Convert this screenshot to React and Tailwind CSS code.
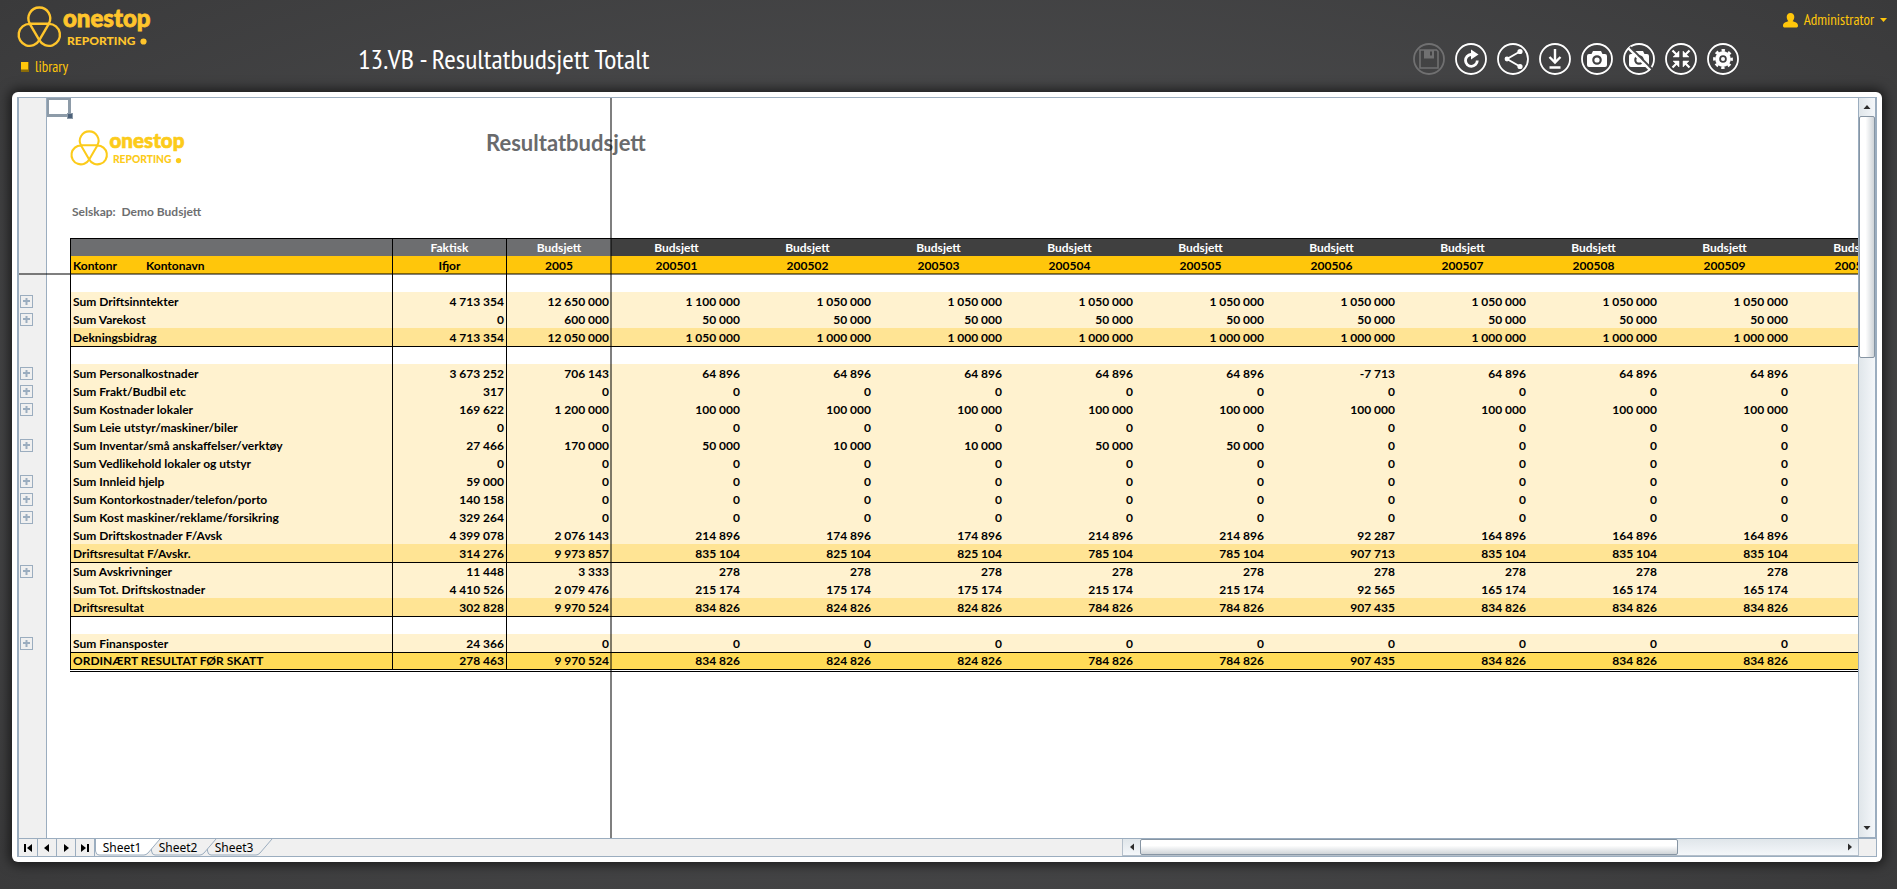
import { useState } from "react";

const months = [
  "200501",
  "200502",
  "200503",
  "200504",
  "200505",
  "200506",
  "200507",
  "200508",
  "200509",
  "200510",
];

const fill = (v) => Array(9).fill(v);

// kind: blank | line | sum | total, expand = has a [+] in the outline gutter
const rows = [
  { kind: "blank" },
  {
    kind: "line",
    expand: true,
    name: "Sum Driftsinntekter",
    actual: "4 713 354",
    year: "12 650 000",
    values: ["1 100 000", ...Array(8).fill("1 050 000")],
  },
  {
    kind: "line",
    expand: true,
    name: "Sum Varekost",
    actual: "0",
    year: "600 000",
    values: fill("50 000"),
  },
  {
    kind: "sum",
    name: "Dekningsbidrag",
    actual: "4 713 354",
    year: "12 050 000",
    values: ["1 050 000", ...Array(8).fill("1 000 000")],
  },
  { kind: "blank" },
  {
    kind: "line",
    expand: true,
    name: "Sum Personalkostnader",
    actual: "3 673 252",
    year: "706 143",
    values: [
      "64 896",
      "64 896",
      "64 896",
      "64 896",
      "64 896",
      "-7 713",
      "64 896",
      "64 896",
      "64 896",
    ],
  },
  {
    kind: "line",
    expand: true,
    name: "Sum Frakt/Budbil etc",
    actual: "317",
    year: "0",
    values: fill("0"),
  },
  {
    kind: "line",
    expand: true,
    name: "Sum Kostnader lokaler",
    actual: "169 622",
    year: "1 200 000",
    values: fill("100 000"),
  },
  {
    kind: "line",
    name: "Sum Leie utstyr/maskiner/biler",
    actual: "0",
    year: "0",
    values: fill("0"),
  },
  {
    kind: "line",
    expand: true,
    name: "Sum Inventar/små anskaffelser/verktøy",
    actual: "27 466",
    year: "170 000",
    values: ["50 000", "10 000", "10 000", "50 000", "50 000", "0", "0", "0", "0"],
  },
  {
    kind: "line",
    name: "Sum Vedlikehold lokaler og utstyr",
    actual: "0",
    year: "0",
    values: fill("0"),
  },
  {
    kind: "line",
    expand: true,
    name: "Sum Innleid hjelp",
    actual: "59 000",
    year: "0",
    values: fill("0"),
  },
  {
    kind: "line",
    expand: true,
    name: "Sum Kontorkostnader/telefon/porto",
    actual: "140 158",
    year: "0",
    values: fill("0"),
  },
  {
    kind: "line",
    expand: true,
    name: "Sum Kost maskiner/reklame/forsikring",
    actual: "329 264",
    year: "0",
    values: fill("0"),
  },
  {
    kind: "line",
    name: "Sum Driftskostnader F/Avsk",
    actual: "4 399 078",
    year: "2 076 143",
    values: [
      "214 896",
      "174 896",
      "174 896",
      "214 896",
      "214 896",
      "92 287",
      "164 896",
      "164 896",
      "164 896",
    ],
  },
  {
    kind: "sum",
    name: "Driftsresultat F/Avskr.",
    actual: "314 276",
    year: "9 973 857",
    values: [
      "835 104",
      "825 104",
      "825 104",
      "785 104",
      "785 104",
      "907 713",
      "835 104",
      "835 104",
      "835 104",
    ],
  },
  {
    kind: "line",
    expand: true,
    name: "Sum Avskrivninger",
    actual: "11 448",
    year: "3 333",
    values: fill("278"),
  },
  {
    kind: "line",
    name: "Sum Tot. Driftskostnader",
    actual: "4 410 526",
    year: "2 079 476",
    values: [
      "215 174",
      "175 174",
      "175 174",
      "215 174",
      "215 174",
      "92 565",
      "165 174",
      "165 174",
      "165 174",
    ],
  },
  {
    kind: "sum",
    name: "Driftsresultat",
    actual: "302 828",
    year: "9 970 524",
    values: [
      "834 826",
      "824 826",
      "824 826",
      "784 826",
      "784 826",
      "907 435",
      "834 826",
      "834 826",
      "834 826",
    ],
  },
  { kind: "blank" },
  {
    kind: "line",
    expand: true,
    name: "Sum Finansposter",
    actual: "24 366",
    year: "0",
    values: fill("0"),
  },
  {
    kind: "total",
    name: "ORDINÆRT RESULTAT FØR SKATT",
    actual: "278 463",
    year: "9 970 524",
    values: [
      "834 826",
      "824 826",
      "824 826",
      "784 826",
      "784 826",
      "907 435",
      "834 826",
      "834 826",
      "834 826",
    ],
  },
];

const rowStyles = {
  blank: "h-[18px] bg-white",
  line: "h-[18px] bg-[#fff2cf]",
  sum: "h-[18px] bg-[#ffe494]",
  total: "h-[17px] bg-[#ffdb57] leading-4",
};

function Logo({ className }) {
  return (
    <svg
      viewBox="0 0 134 42"
      className={`overflow-visible ${className}`}
      role="img"
      aria-label="onestop reporting"
    >
      <g fill="none" stroke="currentColor" strokeWidth="2.4" strokeLinejoin="round">
        <path d="M12.8 16.7 A10.9 10.9 0 1 1 31.8 16.7 Z" />
        <path d="M12.8 16.9 A11 11 0 1 0 22.3 33.2 Z" />
        <path d="M31.8 16.9 A11 11 0 1 1 22.3 33.2 Z" />
      </g>
      <text
        x="46"
        y="20"
        fill="currentColor"
        stroke="currentColor"
        strokeWidth="0.8"
        fontSize="24"
        fontWeight="900"
        fontFamily="Lato, sans-serif"
      >
        onestop
      </text>
      <text
        x="50"
        y="37.5"
        fill="currentColor"
        fontSize="12"
        fontWeight="900"
        fontFamily="Lato, sans-serif"
      >
        REPORTING
      </text>
      <circle cx="126.500" cy="34.500" r="3.1" fill="currentColor" />
    </svg>
  );
}

const tools = [
  {
    label: "Save",
    disabled: true,
    icon: (
      <>
        <path d="M7 7H23.5L25 8.500V25H7Z" fill="none" stroke="currentColor" strokeWidth="1.600" />
        <path d="M11 7h10v8.500H11ZM17 8.500v4h2v-4Z" fill="currentColor" fillRule="evenodd" />
      </>
    ),
  },
  {
    label: "Refresh",
    icon: (
      <>
        <path
          d="M17.500 11.500H16A5.900 5.900 0 1 0 22.300 17.500"
          fill="none"
          stroke="currentColor"
          strokeWidth="2.800"
        />
        <path d="M16 6.500L23.500 11.500L16 16.500Z" fill="currentColor" />
      </>
    ),
  },
  {
    label: "Share",
    icon: (
      <>
        <path d="M23 8.500L10 16L23 23.500" fill="none" stroke="currentColor" strokeWidth="1.900" />
        <circle cx="23" cy="8.500" r="2.600" fill="currentColor" />
        <circle cx="10" cy="16" r="2.400" fill="currentColor" />
        <circle cx="23" cy="23.500" r="2.600" fill="currentColor" />
      </>
    ),
  },
  {
    label: "Download",
    icon: (
      <path
        d="M16 6v13M10.500 14L16 19.500L21.500 14M10.500 24.500h11"
        fill="none"
        stroke="currentColor"
        strokeWidth="2.400"
      />
    ),
  },
  {
    label: "Snapshot",
    icon: (
      <>
        <path
          d="M12 8h8l1.500 3H24a2 2 0 0 1 2 2v9a2 2 0 0 1-2 2H8a2 2 0 0 1-2-2v-9a2 2 0 0 1 2-2h2.500ZM16 12.200a4.800 4.800 0 1 0 0 9.600a4.800 4.800 0 0 0 0-9.600Z"
          fill="currentColor"
          fillRule="evenodd"
        />
        <circle cx="16" cy="17" r="2.600" fill="currentColor" />
      </>
    ),
  },
  {
    label: "Snapshot off",
    icon: (
      <>
        <path
          d="M12 8h8l1.500 3H24a2 2 0 0 1 2 2v9a2 2 0 0 1-2 2H8a2 2 0 0 1-2-2v-9a2 2 0 0 1 2-2h2.500ZM16 12.200a4.800 4.800 0 1 0 0 9.600a4.800 4.800 0 0 0 0-9.600Z"
          fill="currentColor"
          fillRule="evenodd"
        />
        <circle cx="16" cy="17" r="2.600" fill="currentColor" />
        <path d="M7 4L29 26" stroke="#474748" strokeWidth="2.200" />
        <path d="M5 5L27 27" stroke="currentColor" strokeWidth="2.400" />
      </>
    ),
  },
  {
    label: "Collapse",
    icon: (
      <g fill="currentColor" stroke="currentColor">
        <path
          d="M7.500 7.500L13 13M24.500 7.500L19 13M7.500 24.500L13 19M24.500 24.500L19 19"
          strokeWidth="2.200"
        />
        <path
          d="M14 8v6H8ZM18 8v6h6ZM14 24v-6H8ZM18 24v-6h6Z"
          strokeWidth="0.500"
        />
      </g>
    ),
  },
  {
    label: "Settings",
    icon: (
      <>
        <circle cx="16" cy="16" r="5.800" fill="none" stroke="currentColor" strokeWidth="4" />
        <circle
          cx="16"
          cy="16"
          r="8.600"
          fill="none"
          stroke="currentColor"
          strokeWidth="2.600"
          strokeDasharray="3.376 3.376"
          strokeDashoffset="1.688"
        />
        <circle cx="16" cy="16" r="2" fill="currentColor" />
      </>
    ),
  },
];

function Triangle({ points, className }) {
  return (
    <svg viewBox="0 0 12 12" className={className} fill="currentColor" aria-hidden="true">
      <path d={points} />
    </svg>
  );
}

function Header() {
  return (
    <header className="flex h-[92px] shrink-0 text-[#ffc60b]">
      <div className="flex w-[358px] flex-col pt-[7px] pl-[17px]">
        <Logo className="w-[134px] text-[#ffc52c]" />
        <a
          href="#library"
          className="mt-2 ml-1 flex items-center gap-1.5 text-[15px] leading-5"
        >
          <svg viewBox="0 0 8 10" className="h-[10px] w-2" aria-hidden="true">
            <path d="M0 0h8v10H0z" fill="#8a6b08" />
            <path d="M0 0h7v7.500H0z" fill="#ffc60b" />
          </svg>
          library
        </a>
      </div>
      <h1 className="flex-1 pt-[41px] text-[28px] leading-9 text-white">
        13.VB - Resultatbudsjett Totalt
      </h1>
      <div className="flex gap-[10px] pt-[43px]">
        {tools.map((tool) => (
          <button
            key={tool.label}
            type="button"
            aria-label={tool.label}
            disabled={tool.disabled}
            className="h-8 w-8 rounded-full text-white disabled:text-[#707071]"
          >
            <svg viewBox="0 0 32 32" className="h-8 w-8">
              <circle
                cx="16"
                cy="16"
                r="15"
                fill="none"
                stroke="currentColor"
                strokeWidth="1.800"
              />
              {tool.icon}
            </svg>
          </button>
        ))}
      </div>
      <div className="flex w-[158px] justify-end pt-2 pr-[10px]">
        <button type="button" className="flex h-6 items-center text-[15px] leading-5">
          <svg viewBox="0 0 15 15" className="mr-1.5 w-[15px]" fill="currentColor">
            <path d="M7.500 0C10 0 11.300 1.800 11.300 4C11.300 6 10.300 7.300 9.600 8.200C12.500 9 15 10 15 12.500C15 14 14.500 14.500 13 14.500H2C.500 14.500 0 14 0 12.500C0 10 2.500 9 5.400 8.200C4.700 7.300 3.700 6 3.700 4C3.700 1.800 5 0 7.500 0Z" />
          </svg>
          Administrator
          <svg viewBox="0 0 7 4" className="ml-1.5 w-[7px]" fill="currentColor">
            <path d="M0 0h7L3.500 4z" />
          </svg>
        </button>
      </div>
    </header>
  );
}

function Gutter() {
  return (
    <div className="w-7 shrink-0 border-r border-[#9badbf] bg-[#f0f0f0] pt-[176px] pl-px">
      {rows.map((row, i) => (
        <div key={i} className="flex h-[18px] items-center">
          {row.expand && (
            <button
              type="button"
              aria-label={`Expand ${row.name}`}
              className="flex h-[13px] w-[13px] items-center justify-center border border-[#9badbf]"
            >
              <svg viewBox="0 0 7 7" className="h-[7px] w-[7px]">
                <path d="M0 3h7M3.500 0v7" stroke="#9badbf" strokeWidth="2" />
              </svg>
            </button>
          )}
        </div>
      ))}
    </div>
  );
}

function BudgetTable() {
  return (
    <table className="w-[1851px] table-fixed border-separate border-spacing-0 text-[12px] leading-[17px] font-bold text-black">
      <colgroup>
        <col className="w-[74px]" />
        <col className="w-[249px]" />
        <col className="w-[114px]" />
        <col className="w-[104px]" />
        {months.map((m) => (
          <col key={m} className="w-[131px]" />
        ))}
      </colgroup>
      <thead>
        <tr className="h-[18px] text-white">
          <td
            colSpan={2}
            className="border-t border-r border-l border-black bg-[#6d6e70] p-0"
          ></td>
          <th className="border-t border-r border-black bg-[#6d6e70] p-0">Faktisk</th>
          <th className="border-t border-black bg-[#6d6e70] p-0">Budsjett</th>
          {months.map((m) => (
            <th key={m} className="border-t border-black bg-[#404040] p-0">
              Budsjett
            </th>
          ))}
        </tr>
        <tr className="h-[18px] bg-[#ffc60b]">
          <th className="border-l border-black p-0 pl-0.5 text-left">Kontonr</th>
          <th className="border-r border-black p-0 pl-0.5 text-left">Kontonavn</th>
          <th className="border-r border-black p-0">Ifjor</th>
          <th className="p-0">2005</th>
          {months.map((m) => (
            <th key={m} className="p-0">
              {m}
            </th>
          ))}
        </tr>
      </thead>
      <tbody>
        {rows.map((row, i) => {
          // result rows close with a rule, the final row sits between rules
          const line =
            row.kind === "total" || rows[i - 1]?.kind === "sum" ? "border-t" : "";
          return (
            <tr key={i} className={rowStyles[row.kind]}>
              <th
                colSpan={2}
                scope="row"
                className={`border-r border-l border-black p-0 pl-0.5 text-left ${line}`}
              >
                {row.name}
              </th>
              <td className={`border-r border-black p-0 pr-0.5 text-right ${line}`}>
                {row.actual}
              </td>
              <td className={`border-black p-0 pr-0.5 text-right ${line}`}>{row.year}</td>
              {months.map((m, j) => (
                <td key={m} className={`border-black p-0 pr-0.5 text-right ${line}`}>
                  {row.values?.[j]}
                </td>
              ))}
            </tr>
          );
        })}
      </tbody>
    </table>
  );
}

function Sheet() {
  return (
    <div className="relative min-w-0 flex-1 overflow-hidden bg-white pl-[23px]">
      <div className="flex h-[100px] pt-[33px]">
        <Logo className="h-9 w-[115px] text-[#fccb1a]" />
        <h2 className="ml-[301px] text-[22px] leading-6 font-bold text-[#696a6c]">
          Resultatbudsjett
        </h2>
      </div>
      <p className="h-10 pt-[5px] pl-0.5 text-[12px] leading-[17px] font-bold whitespace-pre text-[#6d6e70]">
        Selskap:{"  "}Demo Budsjett
      </p>
      <BudgetTable />
      <div className="h-[3px] w-[1851px] border-y border-black"></div>
      {/* active cell */}
      <div className="absolute top-0 left-0 h-[19px] w-6 border-2 border-r-[3px] border-b-[3px] border-[#8d9ba8]">
        <span className="absolute -right-[5px] -bottom-[5px] h-[6px] w-[6px] border border-[#8d9ba8] bg-[#4c617a]"></span>
      </div>
      {/* frozen column edge */}
      <div className="absolute top-0 bottom-0 left-[563px] w-0.5 bg-black/50"></div>
    </div>
  );
}

function VerticalScroll() {
  return (
    <div className="flex w-[18px] shrink-0 flex-col border-x border-b border-[#9badbf] bg-linear-to-r from-[#e0e6ea] to-[#f4f7fa]">
      <button type="button" aria-label="Scroll up" className="flex h-[18px] items-center justify-center">
        <Triangle points="M6 4L9.500 8h-7z" className="h-3 w-3 text-[#2c2c2c]" />
      </button>
      <div className="h-[242px] w-4 rounded-xs border border-[#8795a3] bg-linear-to-r from-white from-40% to-[#cfd4d8]"></div>
      <button
        type="button"
        aria-label="Scroll down"
        className="mt-auto flex h-[18px] items-center justify-center"
      >
        <Triangle points="M6 8L9.500 4h-7z" className="h-3 w-3 text-[#2c2c2c]" />
      </button>
    </div>
  );
}

const navButtons = [
  { label: "First sheet", d: "M2 2h2v8H2zM10 2v8L5 6z" },
  { label: "Previous sheet", d: "M8 2v8L3 6z" },
  { label: "Next sheet", d: "M4 2v8l5-4z" },
  { label: "Last sheet", d: "M8 2h2v8H8zM2 2v8l5-4z" },
];

const sheets = [
  { name: "Sheet1", layer: "z-30" },
  { name: "Sheet2", layer: "z-20" },
  { name: "Sheet3", layer: "z-10" },
];

function SheetBar() {
  const [active, setActive] = useState("Sheet1");
  return (
    <div className="flex h-[18px] shrink-0 border-t border-[#9badbf] bg-[#f0f0f0]">
      {navButtons.map((b) => (
        <button
          key={b.label}
          type="button"
          aria-label={b.label}
          className="flex w-[19px] items-center justify-center border-r border-[#9badbf]"
        >
          <Triangle points={b.d} className="h-3 w-3 text-black" />
        </button>
      ))}
      <div className="flex flex-1">
        {sheets.map(({ name, layer }) => (
          <button
            key={name}
            type="button"
            onClick={() => setActive(name)}
            className={`relative h-[17px] w-14 pr-0.5 font-['Noto_Sans',sans-serif] text-[12px] leading-4 text-black ${layer}`}
          >
            <svg
              viewBox="0 0 66 17"
              className="absolute top-0 left-0 h-[17px] w-[66px]"
              aria-hidden="true"
            >
              <path
                d="M0.500 0V12Q1 16 4 16H49Q51 16 53 14L65 0"
                fill={active === name ? "#fff" : "#f0f0f0"}
                stroke="#9badbf"
              />
            </svg>
            <span className="relative">{name}</span>
          </button>
        ))}
      </div>
      <div className="flex w-[737px] border-x border-b border-[#b4bfca] bg-linear-to-b from-[#e0e6ea] to-[#f4f7fa]">
        <button
          type="button"
          aria-label="Scroll left"
          className="flex w-[17px] items-center justify-center"
        >
          <Triangle points="M8 2.500v7L4 6z" className="h-3 w-3 text-[#2c2c2c]" />
        </button>
        <div className="h-4 w-[538px] rounded-xs border border-[#8795a3] bg-linear-to-b from-white from-40% to-[#cfd4d8]"></div>
        <button
          type="button"
          aria-label="Scroll right"
          className="ml-auto flex w-[17px] items-center justify-center"
        >
          <Triangle points="M4 2.500v7L8 6z" className="h-3 w-3 text-[#2c2c2c]" />
        </button>
      </div>
      <div className="w-[17px]"></div>
    </div>
  );
}

export default function App() {
  return (
    <div className="flex min-h-screen flex-col bg-[#3c3c3d] bg-radial from-[#58595b] to-[#3a3a3b] font-['PT_Sans_Narrow','Open_Sans_Condensed','Roboto_Condensed',Roboto,sans-serif]">
      <Header />
      <main className="mr-[15px] mb-[27px] ml-3 flex flex-1 rounded-md bg-white p-[5px] shadow-[0_0_12px_3px_rgba(0,0,0,0.6)]">
        <div className="flex min-w-0 flex-1 flex-col border border-l-2 border-[#9badbf] font-[Lato,sans-serif]">
          <div className="relative flex flex-1">
            <Gutter />
            <Sheet />
            {/* frozen row edge */}
            <div className="absolute top-[175px] right-[18px] left-0 h-0.5 bg-black/50"></div>
            <VerticalScroll />
          </div>
          <SheetBar />
        </div>
      </main>
    </div>
  );
}
